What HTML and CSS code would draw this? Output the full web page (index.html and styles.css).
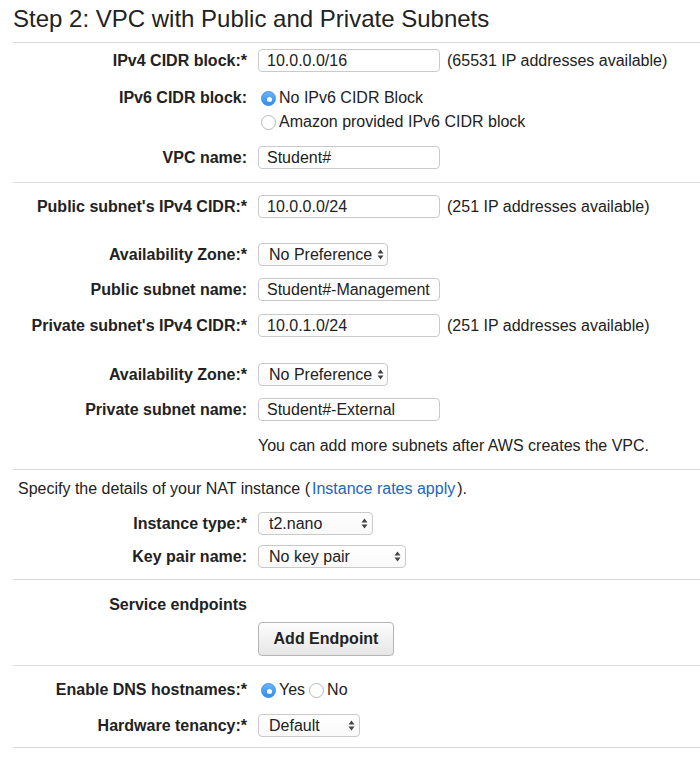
FILE: index.html
```html
<!DOCTYPE html>
<html>
<head>
<meta charset="utf-8">
<link rel="stylesheet" href="styles.css">
</head>
<body>
<h1 class="title">Step 2: VPC with Public and Private Subnets</h1>

<div class="section s1">
  <div class="row mb14">
    <div class="label">IPv4 CIDR block:*</div>
    <div class="input w182">10.0.0.0/16</div>
    <div class="hint">(65531 IP addresses available)</div>
  </div>
  <div class="row top mb12">
    <div class="label lh24">IPv6 CIDR block:</div>
    <div class="radios">
      <div class="radio-line"><span class="radio checked"></span><span class="rtext">No IPv6 CIDR Block</span></div>
      <div class="radio-line"><span class="radio"></span><span class="rtext">Amazon provided IPv6 CIDR block</span></div>
    </div>
  </div>
  <div class="row">
    <div class="label">VPC name:</div>
    <div class="input w182">Student#</div>
  </div>
</div>

<div class="section s2">
  <div class="row mb25">
    <div class="label">Public subnet's IPv4 CIDR:*</div>
    <div class="input w182">10.0.0.0/24</div>
    <div class="hint">(251 IP addresses available)</div>
  </div>
  <div class="row mb12">
    <div class="label">Availability Zone:*</div>
    <div class="select w130"><span>No Preference</span><svg class="arrows" width="7" height="11" viewBox="0 0 7 11"><path d="M3.5 0.5 L6.5 4.5 L0.5 4.5 Z M3.5 10.5 L6.5 6.5 L0.5 6.5 Z" fill="#444"/></svg></div>
  </div>
  <div class="row mb13">
    <div class="label">Public subnet name:</div>
    <div class="input w182">Student#-Management</div>
  </div>
  <div class="row mb26">
    <div class="label">Private subnet's IPv4 CIDR:*</div>
    <div class="input w182">10.0.1.0/24</div>
    <div class="hint">(251 IP addresses available)</div>
  </div>
  <div class="row mb12">
    <div class="label">Availability Zone:*</div>
    <div class="select w130"><span>No Preference</span><svg class="arrows" width="7" height="11" viewBox="0 0 7 11"><path d="M3.5 0.5 L6.5 4.5 L0.5 4.5 Z M3.5 10.5 L6.5 6.5 L0.5 6.5 Z" fill="#444"/></svg></div>
  </div>
  <div class="row mb15">
    <div class="label">Private subnet name:</div>
    <div class="input w182">Student#-External</div>
  </div>
  <div class="row">
    <div class="label"></div>
    <div class="note">You can add more subnets after AWS creates the VPC.</div>
  </div>
</div>

<div class="section s3">
  <p class="intro">Specify the details of your NAT instance (<a class="link" href="#">Instance rates apply</a>).</p>
  <div class="row mb10">
    <div class="label">Instance type:*</div>
    <div class="select w115"><span>t2.nano</span><svg class="arrows" width="7" height="11" viewBox="0 0 7 11"><path d="M3.5 0.5 L6.5 4.5 L0.5 4.5 Z M3.5 10.5 L6.5 6.5 L0.5 6.5 Z" fill="#444"/></svg></div>
  </div>
  <div class="row">
    <div class="label">Key pair name:</div>
    <div class="select w148"><span>No key pair</span><svg class="arrows" width="7" height="11" viewBox="0 0 7 11"><path d="M3.5 0.5 L6.5 4.5 L0.5 4.5 Z M3.5 10.5 L6.5 6.5 L0.5 6.5 Z" fill="#444"/></svg></div>
  </div>
</div>

<div class="section s4">
  <div class="row mb7">
    <div class="label lh20">Service endpoints</div>
  </div>
  <div class="row">
    <div class="label"></div>
    <button class="btn">Add Endpoint</button>
  </div>
</div>

<div class="section s5">
  <div class="row mb12">
    <div class="label lh24">Enable DNS hostnames:*</div>
    <div class="radio-line"><span class="radio checked"></span><span class="rtext">Yes</span><span class="radio gapl"></span><span class="rtext">No</span></div>
  </div>
  <div class="row">
    <div class="label">Hardware tenancy:*</div>
    <div class="select w102"><span>Default</span><svg class="arrows" width="7" height="11" viewBox="0 0 7 11"><path d="M3.5 0.5 L6.5 4.5 L0.5 4.5 Z M3.5 10.5 L6.5 6.5 L0.5 6.5 Z" fill="#444"/></svg></div>
  </div>
</div>
<div class="section end"></div>
</body>
</html>
```

FILE: styles.css
```css
html, body {
  margin: 0;
  padding: 0;
  background: #fff;
}
body {
  font-family: "Liberation Sans", Arial, Helvetica, sans-serif;
  font-size: 16px;
  color: #222;
}
.title {
  margin: 0 0 9px 13px;
  padding-top: 5px;
  font-size: 24px;
  line-height: 28px;
  font-weight: normal;
  color: #222;
}
.section {
  margin-left: 13px;
  border-top: 1px solid #dcdcdc;
}
.s1 { padding: 6px 0 13px; }
.s2 { padding: 12px 0 13px; }
.s3 { padding: 9px 0 11px; }
.s4 { padding: 15px 0 9px; }
.s5 { padding: 12px 0 10px; }
.end { height: 16px; }

.row {
  display: flex;
  align-items: center;
}
.row.top { align-items: flex-start; }
.mb7 { margin-bottom: 7px; }
.mb10 { margin-bottom: 10px; }
.mb12 { margin-bottom: 12px; }
.mb13 { margin-bottom: 13px; }
.mb14 { margin-bottom: 14px; }
.mb15 { margin-bottom: 15px; }
.mb25 { margin-bottom: 25px; }
.mb26 { margin-bottom: 26px; }

.label {
  width: 234px;
  flex: none;
  margin-right: 11px;
  text-align: right;
  font-weight: bold;
  color: #222;
  line-height: 18px;
  white-space: nowrap;
}
.lh24 { line-height: 24px; }
.lh20 { line-height: 20px; }

.input {
  box-sizing: border-box;
  height: 23px;
  line-height: 21px;
  padding: 0 8px;
  border: 1px solid #cacaca;
  border-radius: 4px;
  background: #fff;
  color: #222;
  white-space: nowrap;
}
.w182 { width: 182px; }
.hint {
  margin-left: 7px;
  color: #222;
  white-space: nowrap;
}
.select {
  box-sizing: border-box;
  height: 23px;
  display: flex;
  align-items: center;
  justify-content: space-between;
  padding: 0 4px 0 10px;
  border: 1px solid #cacaca;
  border-radius: 4px;
  background: linear-gradient(#ffffff, #f9f9f9);
  color: #222;
  white-space: nowrap;
}
.select span { line-height: 21px; }
.arrows { flex: none; margin-left: 5px; }
.w130 { width: 130px; }
.w115 { width: 115px; }
.w148 { width: 148px; }
.w102 { width: 102px; }

.radios { display: flex; flex-direction: column; }
.radio-line {
  display: flex;
  align-items: center;
  height: 24px;
  margin-left: 3px;
}
.radio {
  box-sizing: border-box;
  width: 15px;
  height: 15px;
  border-radius: 50%;
  border: 1px solid #b9b9b9;
  background: #fff;
  flex: none;
  position: relative;
}
.radio.checked {
  border-color: #3a8ff0;
  background: linear-gradient(#6cb3fb, #2f8cf2);
}
.radio.checked::after {
  content: "";
  position: absolute;
  left: 5px;
  top: 5px;
  width: 5px;
  height: 5px;
  border-radius: 50%;
  background: #fff;
}
.rtext { margin-left: 3px; line-height: 24px; }
.gapl { margin-left: 4px; }

.note { line-height: 20px; color: #222; white-space: nowrap; }
.intro {
  margin: 0 0 13px 5px;
  line-height: 20px;
  color: #222;
  white-space: nowrap;
}
.link { color: #1a66c0; text-decoration: none; margin: 0 2px; }

.btn {
  box-sizing: border-box;
  width: 136px;
  height: 34px;
  padding: 0;
  border: 1px solid #b5b5b5;
  border-radius: 4px;
  background: linear-gradient(#fdfdfd, #e6e6e6);
  font-family: "Liberation Sans", Arial, sans-serif;
  font-weight: bold;
  font-size: 16px;
  color: #222;
}
```
